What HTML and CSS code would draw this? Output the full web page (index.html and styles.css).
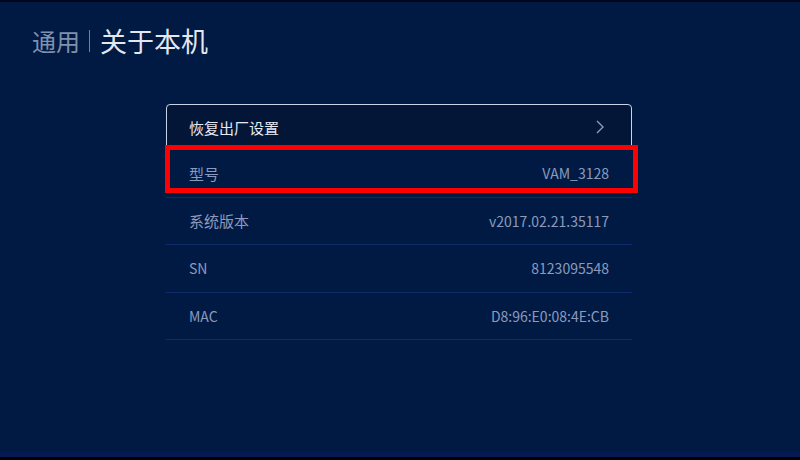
FILE: index.html
```html
<!DOCTYPE html>
<html lang="zh-CN">
<head>
<meta charset="utf-8">
<link rel="stylesheet" href="styles.css">
</head>
<body>
<div class="screen">
  <header class="header">
    <span class="crumb">通用</span>
    <span class="divider"></span>
    <span class="title">关于本机</span>
  </header>
  <div class="list">
    <div class="row focused">
      <span class="label">恢复出厂设置</span>
      <svg class="chev" width="8" height="14" viewBox="0 0 8 14"><polyline points="1,1 7,7 1,13" fill="none" stroke="#8e9cba" stroke-width="1.4"/></svg>
    </div>
    <div class="row">
      <span class="label">型号</span>
      <span class="value">VAM_3128</span>
    </div>
    <div class="row">
      <span class="label">系统版本</span>
      <span class="value">v2017.02.21.35117</span>
    </div>
    <div class="row">
      <span class="label latin">SN</span>
      <span class="value">8123095548</span>
    </div>
    <div class="row">
      <span class="label latin">MAC</span>
      <span class="value">D8:96:E0:08:4E:CB</span>
    </div>
    <div class="highlight"></div>
  </div>
  <div class="bottom-band"></div>
</div>
</body>
</html>
```
FILE: styles.css
```css
html, body {
  margin: 0;
  padding: 0;
  background: #000;
}
.screen {
  position: relative;
  width: 800px;
  height: 460px;
  box-sizing: border-box;
  background: #011a44;
  border-top: 2px solid #00081a;
  border-bottom: 3px solid #000;
  font-family: "Noto Sans CJK SC", "Noto Sans", sans-serif;
  overflow: hidden;
}
.header {
  display: flex;
  align-items: center;
  padding: 22px 0 0 32px;
  height: 34px;
}
.crumb {
  font-size: 24px;
  color: #7f91ad;
  line-height: 34px;
}
.divider {
  width: 1px;
  height: 22px;
  background: #6f82a2;
  margin: 0 10px 0 9px;
}
.title {
  font-size: 27px;
  color: #e3e8ef;
  line-height: 34px;
}
.list {
  position: relative;
  width: 466px;
  margin: 46px 0 0 166px;
}
.row {
  display: flex;
  align-items: center;
  justify-content: space-between;
  height: 47.5px;
  box-sizing: border-box;
  padding: 0 23px 0 23px;
  border-bottom: 1px solid #0c2c6a;
  font-size: 15px;
}
.row.focused {
  height: 46px;
  border: 1.5px solid #c9d3e6;
  border-radius: 4px;
  background: #041637;
  padding: 0 27px 0 22px;
}
.label {
  color: #8b9bbd;
}
.label.latin {
  font-size: 14px;
}
.focused .label {
  color: #e4e9f2;
}
.value {
  color: #8b9bbd;
  font-size: 14px;
}
.chev {
  display: block;
}
.highlight {
  position: absolute;
  left: -1px;
  top: 41px;
  width: 473px;
  height: 48px;
  box-sizing: border-box;
  border: 5px solid #ff0000;
  pointer-events: none;
}
.bottom-band {
  position: absolute;
  left: 0;
  right: 0;
  bottom: 0;
  height: 5px;
  background: #061a52;
}
```
